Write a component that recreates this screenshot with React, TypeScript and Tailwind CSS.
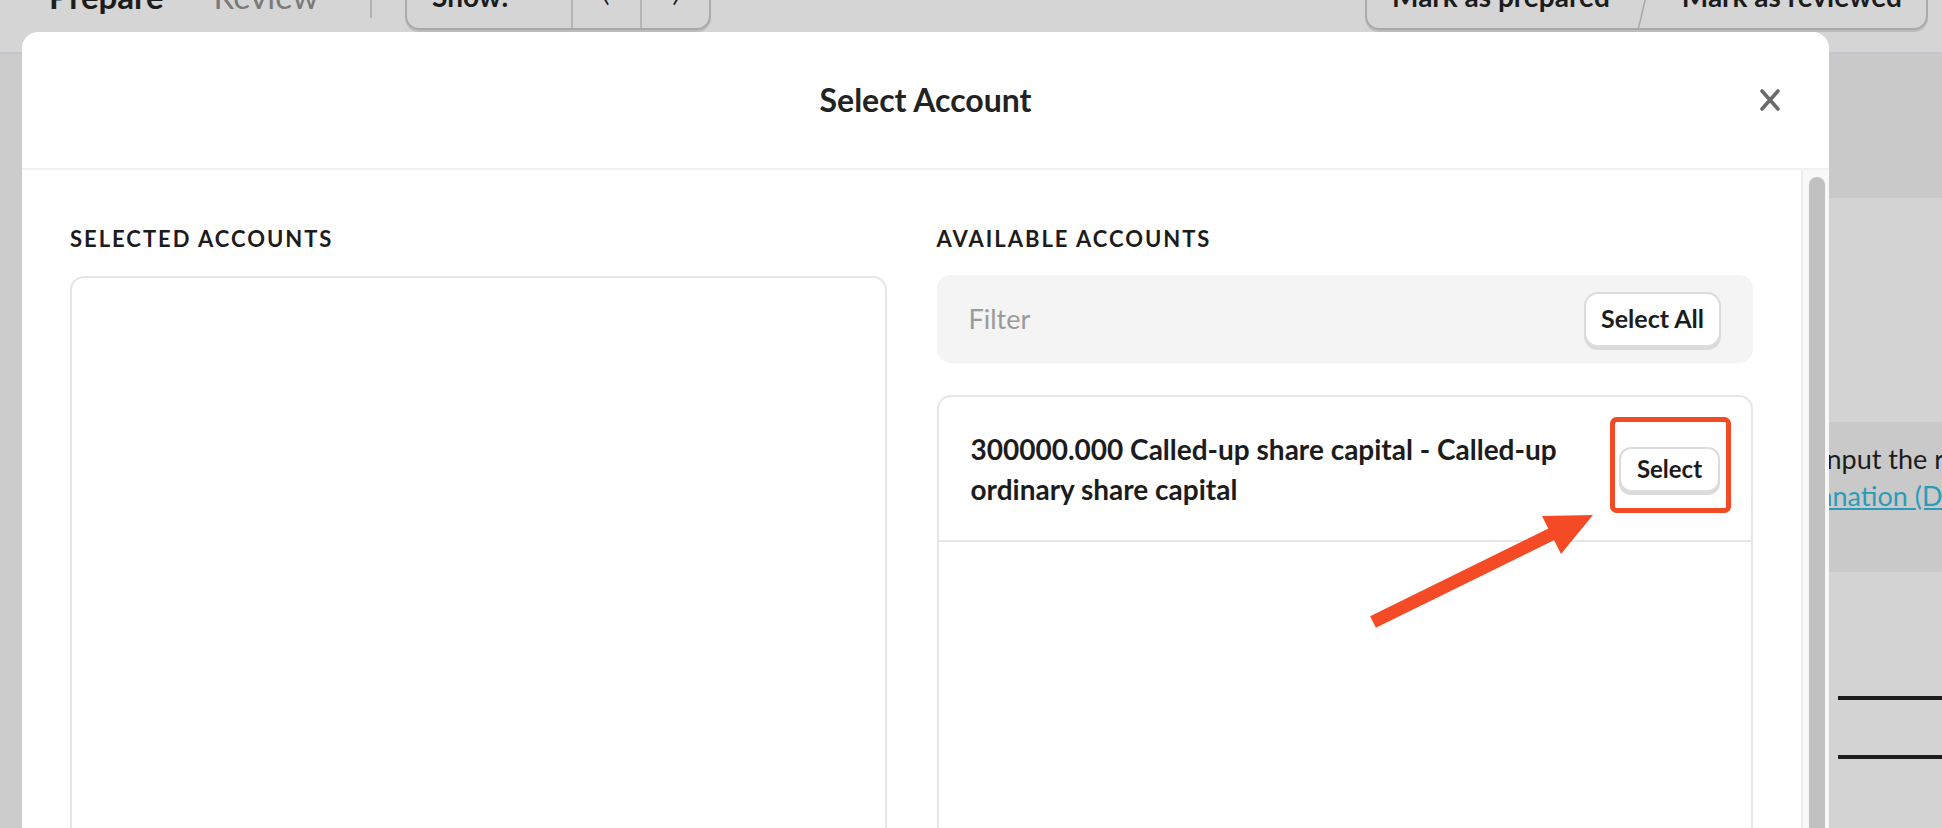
import { useState } from "react";

const font = "font-['Lato','Liberation_Sans',sans-serif]";

function Toolbar() {
    return (
        <div className="h-[54px] overflow-hidden border-b-2 border-[#c3c6d1] bg-[#d5d5d5]">
            <div className="-mt-[37px] flex h-[67px] items-stretch">
                <div className="flex w-[321px] items-center pl-[49px] text-[33px]">
                    <span className="font-bold text-[#1c1c1c]">Prepare</span>
                    <span className="ml-[50px] text-[#7a7a7a]">Review</span>
                </div>
                <div className="ml-[49px] h-[55px] w-[2px] bg-[#b2b2b2]" />
                <div className="ml-[33px] flex rounded-b-[14px] border-2 border-t-0 border-[#a9a9a9] text-[28px] font-bold text-[#1c1c1c] shadow-[0_2px_0_#bcbcbc]">
                    <div className="flex w-[164px] items-center pl-[25px]">Show:</div>
                    <div className="flex w-[69px] items-center justify-center border-l-2 border-[#b5b5b5] font-normal">‹</div>
                    <div className="flex w-[69px] items-center justify-center border-l-2 border-[#b5b5b5] font-normal">›</div>
                </div>
                <div className="mr-[14px] ml-auto flex rounded-b-[14px] border-2 border-t-0 border-[#a9a9a9] text-[28px] font-bold text-[#1c1c1c] shadow-[0_2px_0_#bcbcbc]">
                    <div className="flex items-center pr-[26px] pl-[25px]">Mark as prepared</div>
                    <svg width="20" height="67" className="shrink-0">
                        <line x1="18" y1="0" x2="2" y2="67" stroke="#a9a9a9" strokeWidth="1.5" />
                    </svg>
                    <div className="flex items-center pr-[24px] pl-[26px]">Mark as reviewed</div>
                </div>
            </div>
        </div>
    );
}

// page content sitting underneath the dialog
function PageBehind() {
    return (
        <div className="flex h-[774px]">
            <aside className="w-[240px] bg-[#cccccc]" />
            <main className="flex flex-1">
                <div className="flex-1" />
                <div className="w-[210px] overflow-hidden whitespace-nowrap">
                    <div className="h-[144px] bg-[#c9c9c9]" />
                    <div className="h-[224px]" />
                    <div className="flex h-[150px] flex-col bg-[#c9c9c9] pt-[18px] text-[27px] leading-[37px]">
                        <p className="ml-[5px] text-[#1c1c1c]">Please input the relevant figures</p>
                        <a className="ml-[38px] text-[#2a9cba] underline">explanation (DAC)</a>
                    </div>
                    <div className="mt-[124px] ml-[106px] border-b-4 border-[#1c1c1c]" />
                    <div className="mt-[55px] ml-[106px] border-b-4 border-[#1c1c1c]" />
                </div>
            </main>
        </div>
    );
}

function AccountModal() {
    const [filter, setFilter] = useState("");

    return (
        <div className="absolute top-[32px] left-[22px] flex h-[820px] w-[1807px] flex-col rounded-t-[16px] bg-white">
            <div className="relative flex h-[138px] shrink-0 items-center justify-center border-b-2 border-[#f1f1f1]">
                <h2 className="text-[32px] font-bold text-[#222]">Select Account</h2>
                <button className="absolute top-[57px] right-[48px] h-[22px] w-[22px]">
                    <svg viewBox="0 0 22 22" width="22" height="22">
                        <path d="M3 2 L19 20 M19 2 L3 20" stroke="#6b6b6b" strokeWidth="3.6" strokeLinecap="round" />
                    </svg>
                </button>
            </div>

            <div className="flex flex-1">
                <div className="grid flex-1 grid-cols-2 gap-x-[50px] px-[48px] pt-[57px]">
                    <div className="flex flex-col">
                        <h3 className="text-[22px] leading-[24px] font-bold tracking-[0.09em] text-[#1c1c1c]">
                            SELECTED ACCOUNTS
                        </h3>
                        <div className="mt-[25px] h-[600px] rounded-[14px] border-2 border-[#e6e6e6]" />
                    </div>

                    <div className="flex flex-col">
                        <h3 className="text-[22px] leading-[24px] font-bold tracking-[0.09em] text-[#1c1c1c]">
                            AVAILABLE ACCOUNTS
                        </h3>
                        <div className="mt-[24px] flex h-[88px] items-center justify-between rounded-[14px] bg-[#f4f4f4] px-[32px]">
                            <input
                                value={filter}
                                onChange={(e) => setFilter(e.currentTarget.value)}
                                placeholder="Filter"
                                className="flex-1 bg-transparent text-[27px] text-[#1c1c1c] outline-none placeholder:text-[#9a9a9a]"
                            />
                            <button className="h-[55px] rounded-[14px] border-2 border-[#dcdcdc] bg-white px-[15px] text-[25px] font-bold text-[#1c1c1c] shadow-[0_3px_0_#dadada]">
                                Select All
                            </button>
                        </div>

                        <div className="mt-[32px] h-[600px] rounded-[14px] border-2 border-[#e6e6e6]">
                            <div className="flex items-center justify-between gap-[50px] border-b-2 border-[#e6e6e6] pt-[32px] pr-[31px] pb-[31px] pl-[32px]">
                                <p className="text-[28px] leading-[40px] font-bold text-[#1c1c1c]">
                                    300000.000 Called-up share capital - Called-up ordinary share capital
                                </p>
                                <button className="h-[45px] w-[101px] shrink-0 rounded-[12px] border-2 border-[#dcdcdc] bg-white text-[24px] font-bold text-[#1c1c1c] shadow-[0_3px_0_#dadada]">
                                    Select
                                </button>
                            </div>
                        </div>
                    </div>
                </div>

                <div className="w-[28px] shrink-0 border-l-2 border-[#ececec] bg-[#f8f8f8] pt-[7px] pl-[6px]">
                    <div className="h-[700px] w-[16px] rounded-full bg-[#c1c1c1]" />
                </div>
            </div>
        </div>
    );
}

// red callout pointing at the Select button
function Callout() {
    return (
        <svg className="pointer-events-none absolute inset-0" width="1942" height="828">
            <rect x="1612.5" y="419.5" width="116" height="91" rx="4" fill="none" stroke="#f24a25" strokeWidth="5" />
            <line x1="1373" y1="622" x2="1556" y2="532" stroke="#f44a26" strokeWidth="13" />
            <polygon points="1593,515 1542,516 1561,554" fill="#f44a26" />
        </svg>
    );
}

export default function App() {
    return (
        <div className={`relative h-[828px] w-[1942px] overflow-hidden bg-[#d3d3d3] ${font}`}>
            <Toolbar />
            <PageBehind />
            <AccountModal />
            <Callout />
        </div>
    );
}
